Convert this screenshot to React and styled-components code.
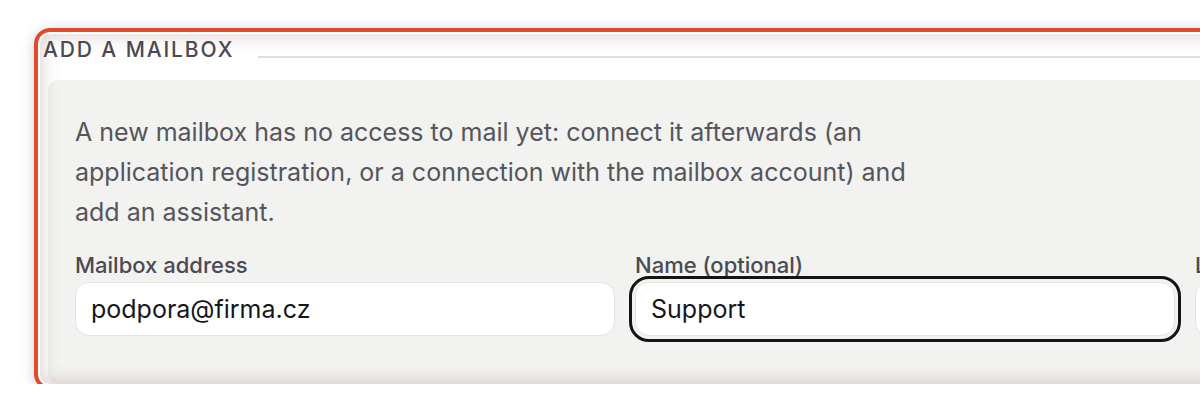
import React from "react";
import styled, { createGlobalStyle } from "styled-components";

const Global = createGlobalStyle`
  html, body { margin: 0; padding: 0; background: #ffffff; overflow: hidden; }
  body { font-family: Inter, "Noto Sans", sans-serif; -webkit-font-smoothing: antialiased; }
`;

const Page = styled.div`
  width: 1900px;
  padding: 34px 0 0 40px;
`;

const Section = styled.section`
  position: relative;
  height: 350px;
  display: flex;
  flex-direction: column;
  background: #ffffff;
`;

const Highlight = styled.div`
  position: absolute;
  inset: -6px;
  border: 4px solid #e14a2c;
  border-radius: 16px;
  pointer-events: none;
  box-shadow:
    0 2px 14px rgba(0, 0, 0, 0.18),
    inset 0 0 0 2px #ffffff,
    inset 0 0 16px 5px rgba(120, 70, 60, 0.22);
`;

const TitleRow = styled.div`
  display: flex;
  align-items: flex-end;
  gap: 24px;
  height: 46px;
  box-sizing: border-box;
  padding: 0 0 18px 3px;
`;

const Title = styled.h2`
  margin: 0;
  font-size: 21px;
  line-height: 24px;
  font-weight: 500;
  letter-spacing: 0.09em;
  color: #4a4a52;
  text-transform: uppercase;
`;

const Rule = styled.div`
  flex: 1;
  height: 2px;
  margin-bottom: 4px;
  background: #dedede;
`;

const Panel = styled.div`
  flex: 1;
  margin-left: 8px;
  background: #f2f2f0;
  border-radius: 10px 0 0 10px;
  padding: 32px 0 0 27px;
  display: flex;
  flex-direction: column;
  gap: 20px;
`;

const Description = styled.p`
  margin: 0;
  max-width: 870px;
  font-size: 25px;
  line-height: 40px;
  color: #55555c;
`;

const Fields = styled.div`
  display: grid;
  grid-template-columns: repeat(3, 540px);
  column-gap: 20px;
`;

const Field = styled.label`
  display: flex;
  flex-direction: column;
  gap: 4px;
`;

const Label = styled.span`
  font-size: 22px;
  line-height: 26px;
  font-weight: 500;
  color: #4a4a52;
`;

const Input = styled.div`
  height: 54px;
  box-sizing: border-box;
  display: flex;
  align-items: center;
  padding: 0 15px;
  background: #ffffff;
  border: 1px solid #e4e4e1;
  border-radius: 14px;
  font-size: 25px;
  color: #16161a;
  outline: ${(p) => (p.$focused ? "3px solid #141414" : "none")};
  outline-offset: 3px;
`;

export default function App() {
  return (
    <>
      <Global />
      <Page>
        <Section>
          <TitleRow>
            <Title>Add a mailbox</Title>
            <Rule />
          </TitleRow>
          <Panel>
            <Description>
              A new mailbox has no access to mail yet: connect it afterwards (an
              application registration, or a connection with the mailbox account) and
              add an assistant.
            </Description>
            <Fields>
              <Field>
                <Label>Mailbox address</Label>
                <Input>podpora@firma.cz</Input>
              </Field>
              <Field>
                <Label>Name (optional)</Label>
                <Input $focused>Support</Input>
              </Field>
              <Field>
                <Label>Language</Label>
                <Input>Čeština</Input>
              </Field>
            </Fields>
          </Panel>
          <Highlight />
        </Section>
      </Page>
    </>
  );
}
